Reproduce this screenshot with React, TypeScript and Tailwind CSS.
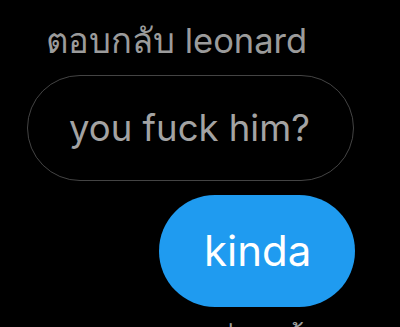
export default function App() {
  return (
    <div className="h-[327px] w-[400px] overflow-hidden bg-black font-['Inter','Noto_Sans',sans-serif]">
      <div className="flex flex-col">
        <p className="ml-[46px] mt-[20px] text-[34.5px] leading-[42px] text-[#9b9b9b]">ตอบกลับ leonard</p>

        <div className="ml-[27px] mt-[13px] flex h-[106px] w-[327px] items-center rounded-full border-[1.5px] border-[#444444] pl-[41px]">
          <span className="text-[36.5px] leading-none text-[#a3a3a3]">you fuck him?</span>
        </div>

        <div className="mr-[45px] mt-[14px] flex h-[112px] w-[196px] items-center self-end rounded-full bg-[#1f9bf0] pl-[45px]">
          <span className="text-[42px] leading-none text-white">kinda</span>
        </div>

        <p className="mr-[80px] mt-[10px] self-end text-[28px] leading-[36px] text-[#9b9b9b]">อ่านแล้ว</p>
      </div>
    </div>
  );
}
